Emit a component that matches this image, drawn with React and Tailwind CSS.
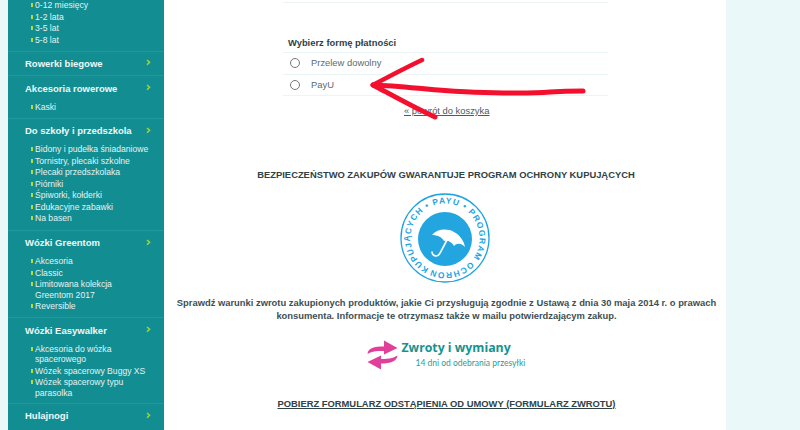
const groups = [
  { items: ["0-12 miesięcy", "1-2 lata", "3-5 lat", "5-8 lat"], cls: "pb-[5px]", first: true },
  { title: "Rowerki biegowe", cls: "pt-[4.5px] pb-[5px]" },
  { title: "Akcesoria rowerowe", items: ["Kaski"], cls: "pt-[6px] pb-[4.5px]" },
  { title: "Do szkoły i przedszkola", items: ["Bidony i pudełka śniadaniowe", "Tornistry, plecaki szkolne", "Plecaki przedszkolaka", "Piórniki", "Śpiworki, kołderki", "Edukacyjne zabawki", "Na basen"], cls: "pt-[5.5px] pb-[5px]" },
  { title: "Wózki Greentom", items: ["Akcesoria", "Classic", "Limitowana kolekcja Greentom 2017", "Reversible"], cls: "pt-[5.5px] pb-[4px]" },
  { title: "Wózki Easywalker", items: ["Akcesoria do wózka spacerowego", "Wózek spacerowy Buggy XS", "Wózek spacerowy typu parasolka"], cls: "pt-[6px] pb-[4px]" },
  { title: "Hulajnogi", cls: "pt-[5px]" },
];

function Chevron() {
  return (
    <svg width="5" height="7" viewBox="0 0 5 7" className="-mt-[1px] shrink-0">
      <path d="M1 1 L3.6 3.3 L1 5.8" fill="none" stroke="#a6d62a" strokeWidth="1.5" />
    </svg>
  );
}

function Group({ g }) {
  return (
    <div className={`${g.cls} border-b border-[#1d9a9e] last:border-b-0`}>
      {g.title && (
        <div className="flex items-center justify-between pl-[17px] pr-[13px] h-[13px] text-[9.5px] leading-[13px] font-bold text-[#f0f7f7]">
          <span>{g.title}</span>
          <Chevron />
        </div>
      )}
      {g.items && (
        <ul className={g.first ? "" : "mt-[7px]"}>
          {g.items.map((t) => (
            <li key={t} className="relative pl-[27px] pr-[14px] text-[8.6px] leading-[10.5px] mb-[1px] text-[#e3f2f2]">
              <span className="absolute left-[23px] top-[3px] w-[1.5px] h-[4px] bg-[#b6dc3c]" />
              {t}
            </li>
          ))}
        </ul>
      )}
    </div>
  );
}

function Umbrella() {
  return (
    <svg width="92" height="90" viewBox="0 0 92 90" className="shrink-0">
      <defs>
        <path id="ringText" transform="rotate(-62 46 45)" d="M46 45 m-34.5 0 a34.5 34.5 0 1 1 69 0 a34.5 34.5 0 1 1 -69 0" />
      </defs>
      <circle cx="46" cy="45" r="44" fill="#fff" stroke="#1ba3df" strokeWidth="1.3" />
      <circle cx="46" cy="46" r="27" fill="#23a6e0" />
      <text fontSize="8.4" fontWeight="700" fill="#1ba3df" letterSpacing="1.05" fontFamily='"Liberation Sans", sans-serif'>
        <textPath href="#ringText" startOffset="0">KUPUJĄCYCH • PAYU • PROGRAM OCHRONY</textPath>
      </text>
      <path d="M33 42 C38 36 48 35 55 39 C61 42 65 48 66 54 C62 50 58 50 55 53 C53 49 49 47 45 48 C43 44 38 42 33 42 Z" fill="#fff" />
      <path d="M48 47 L41 60 C39 65 33 63 33 59" fill="none" stroke="#fff" strokeWidth="1.6" strokeLinecap="round" />
    </svg>
  );
}

function Returns() {
  return (
    <div className="flex items-start w-[160px] h-[30px] ml-[3px]">
      <svg width="31" height="30" viewBox="0 0 31 30" className="shrink-0">
        <path d="M0.5 14 C1 8 7 6.5 17 6.5 L17 0.5 L30.5 8 L17 14.5 L17 11 C9 11 4 11.5 0.5 14 Z" fill="#e0409a" />
        <path d="M30.5 15.5 C30 21 24 23.5 14 23.5 L14 29.5 L0.5 22 L14 15.5 L14 19 C22 19 27 18 30.5 15.5 Z" fill="#e0409a" />
      </svg>
      <div className="ml-[4px] flex flex-col">
        <span className="text-[12.3px] leading-[16px] font-bold text-[#14938f] whitespace-nowrap font-['Open_Sans',sans-serif]">Zwroty i wymiany</span>
        <span className="text-[8.5px] leading-[12px] pl-[14px] mt-[1px] text-[#1f9d9a] whitespace-nowrap font-['Lato',sans-serif]">14 dni od odebrania przesyłki</span>
      </div>
    </div>
  );
}

function Arrow() {
  return (
    <svg width="240" height="90" viewBox="0 0 240 90" className="absolute left-[360px] top-[48px] pointer-events-none blur-[0.4px]">
      <g fill="none" stroke="#f3102e" strokeWidth="5" strokeLinecap="round" strokeLinejoin="round">
        <path d="M13 37 C45 38 75 43 110 44 C140 45 165 46 190 44 C205 43 212 43 223 43" />
        <path d="M13 37 C28 29 45 20 62 12" strokeWidth="4.5" />
        <path d="M13 37 C30 46 55 60 75 69" strokeWidth="5" />
      </g>
    </svg>
  );
}

export default function App() {
  return (
    <div className="relative flex h-[430px] w-[800px] overflow-hidden bg-[#eaf8fa] font-['Liberation_Sans',Arial,sans-serif]">
      <aside className="ml-[8px] w-[156px] shrink-0 bg-[#128e92]">
        {groups.map((g, i) => (
          <Group key={i} g={g} />
        ))}
      </aside>
      <main className="w-[562px] shrink-0 bg-white text-[#33474a]">
        <div className="ml-[119px] w-[325px]">
          <div className="h-[3px] border-b border-[#eaf5f5]" />
          <h3 className="mt-[34px] pl-[5px] text-[9.4px] leading-[12px] font-bold text-[#2f4245]">Wybierz formę płatności</h3>
          <div className="mt-[3px] border-t border-[#eaf5f5]">
            {["Przelew dowolny", "PayU"].map((t) => (
              <div key={t} className="flex items-center h-[21.5px] border-b border-[#eaf5f5] pl-[7px] text-[9.4px] text-[#5a6b6d]">
                <span className="w-[10px] h-[10px] rounded-full border border-[#767676] bg-white" />
                <span className="ml-[11px]">{t}</span>
              </div>
            ))}
          </div>
        </div>
        <div className="mt-[9px] ml-[240px] text-[9.4px] leading-[12px] underline text-[#4a5c5e]">« powrót do koszyka</div>
        <h2 className="mt-[52px] pl-[2px] text-center text-[9.4px] leading-[12px] font-bold text-[#2f4245]">BEZPIECZEŃSTWO ZAKUPÓW GWARANTUJE PROGRAM OCHRONY KUPUJĄCYCH</h2>
        <div className="mt-[12px] flex justify-center">
          <Umbrella />
        </div>
        <p className="mt-[13px] pl-[3px] text-center text-[9.4px] leading-[13px] font-bold text-[#3d5053]">
          Sprawdź warunki zwrotu zakupionych produktów, jakie Ci przysługują zgodnie z Ustawą z dnia 30 maja 2014 r. o prawach<br />
          konsumenta. Informacje te otrzymasz także w mailu potwierdzającym zakup.
        </p>
        <div className="mt-[18px] flex justify-center">
          <Returns />
        </div>
        <div className="mt-[28px] pl-[3px] text-center text-[9.4px] leading-[12px] font-bold underline text-[#2f4245]">POBIERZ FORMULARZ ODSTĄPIENIA OD UMOWY (FORMULARZ ZWROTU)</div>
      </main>
      <Arrow />
    </div>
  );
}
